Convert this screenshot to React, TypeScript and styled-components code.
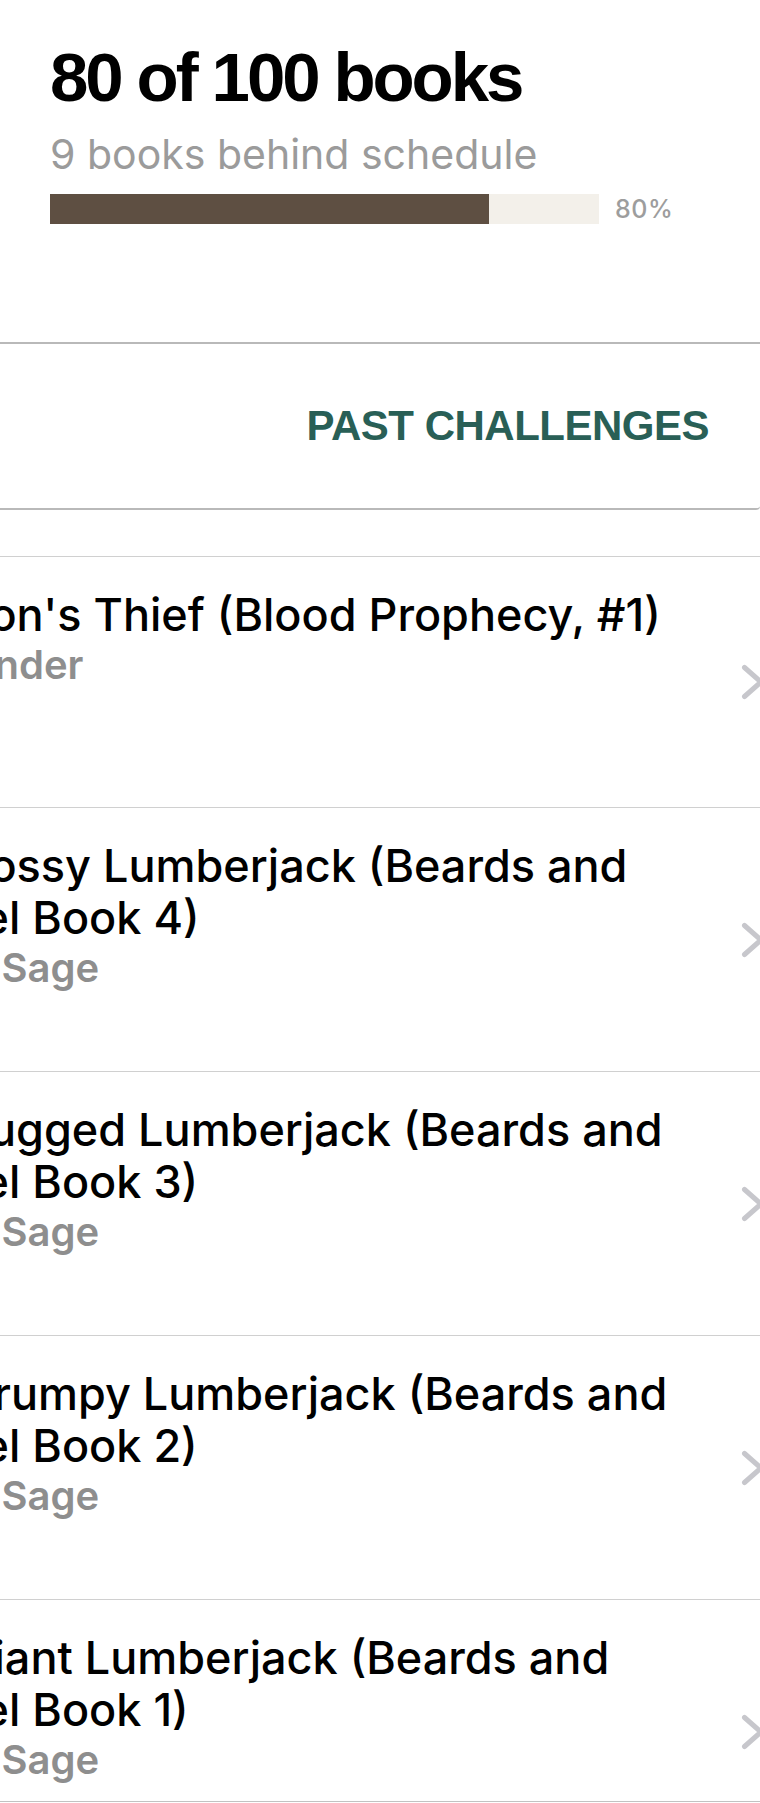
import React from "react";
import styled, { createGlobalStyle } from "styled-components";

const GlobalStyle = createGlobalStyle`
  html, body {
    margin: 0;
    padding: 0;
    background: #ffffff;
  }
  body {
    font-family: Inter, "Noto Sans", sans-serif;
    overflow: hidden;
    -webkit-font-smoothing: antialiased;
  }
  * {
    box-sizing: border-box;
  }
`;

const Screen = styled.div`
  height: 1803px;
  display: flex;
  flex-direction: column;
  padding-bottom: 1px;
`;

const Header = styled.header`
  height: 342px;
  padding: 40px 50px 0;
`;

const Goal = styled.h1`
  margin: 0;
  font-family: "Liberation Sans", Arial, sans-serif;
  font-size: 69px;
  line-height: 76px;
  font-weight: 700;
  color: #000;
  letter-spacing: -3.1px;
`;

const Behind = styled.div`
  margin-top: 16px;
  font-size: 41px;
  line-height: 44px;
  font-weight: 400;
  color: #9b9b9b;
`;

const ProgressRow = styled.div`
  margin-top: 18px;
  display: flex;
  align-items: center;
  gap: 16px;
`;

const Track = styled.div`
  width: 549px;
  height: 30px;
  background: #f3f0ea;
  display: flex;
`;

const Fill = styled.div`
  height: 100%;
  background: #5e4f42;
`;

const Percent = styled.span`
  font-size: 25px;
  font-weight: 500;
  color: #9d9d9d;
  letter-spacing: 0.5px;
`;

const ChallengesCard = styled.section`
  height: 168px;
  border-top: 2px solid #b9b9b9;
  border-bottom: 2px solid #b9b9b9;
  border-bottom-right-radius: 4px;
  display: flex;
  align-items: center;
  justify-content: flex-end;
  padding-right: 51px;
`;

const PastLink = styled.a`
  font-family: "Liberation Sans", Arial, sans-serif;
  font-size: 42px;
  font-weight: 700;
  letter-spacing: -0.5px;
  color: #295f56;
  text-decoration: none;
`;

const ListViewport = styled.div`
  flex: 1;
  margin-top: 46px;
  overflow: hidden;
  border-top: 1px solid #d0d0d0;
  border-bottom: 1px solid #c2c2c2;
`;

const ListTrack = styled.ul`
  list-style: none;
  margin: 0 0 0 -135px;
  padding: 0;
  width: calc(100% + 143px);
`;

const Row = styled.li<{ $height: number }>`
  height: ${(p) => p.$height}px;
  display: grid;
  grid-template-columns: 1fr 30px;
  column-gap: 20px;
  border-bottom: 1px solid #d0d0d0;
`;

const BookText = styled.div`
  align-self: start;
  padding-top: 32px;
`;

const BookTitle = styled.div`
  font-size: 45px;
  line-height: 52px;
  font-weight: 500;
  color: #000;
`;

const BookAuthor = styled.div`
  margin-top: 2px;
  font-size: 40px;
  line-height: 44px;
  font-weight: 600;
  color: #8e8e8e;
`;

const Chevron = styled.svg`
  align-self: center;
  width: 30px;
  height: 44px;
`;

const books = [
  { title: "Daemon's Thief (Blood Prophecy, #1)", author: "Mia Zander", height: 251 },
  { title: "The Bossy Lumberjack (Beards and Flannel Book 4)", author: "Parker Sage", height: 264 },
  { title: "The Rugged Lumberjack (Beards and Flannel Book 3)", author: "Parker Sage", height: 264 },
  { title: "The Grumpy Lumberjack (Beards and Flannel Book 2)", author: "Parker Sage", height: 264 },
  { title: "The Giant Lumberjack (Beards and Flannel Book 1)", author: "Parker Sage", height: 264 },
];

const read = 80;
const goal = 100;

export default function App() {
  const pct = Math.round((read / goal) * 100);
  return (
    <>
      <GlobalStyle />
      <Screen>
        <Header>
          <Goal>{`${read} of ${goal} books`}</Goal>
          <Behind>9 books behind schedule</Behind>
          <ProgressRow>
            <Track>
              <Fill style={{ width: `${pct}%` }} />
            </Track>
            <Percent>{pct}%</Percent>
          </ProgressRow>
        </Header>
        <ChallengesCard>
          <PastLink href="#">PAST CHALLENGES</PastLink>
        </ChallengesCard>
        <ListViewport>
          <ListTrack>
            {books.map((b) => (
              <Row key={b.title} $height={b.height}>
                <BookText>
                  <BookTitle>{b.title}</BookTitle>
                  <BookAuthor>{b.author}</BookAuthor>
                </BookText>
                <Chevron viewBox="0 0 30 44">
                  <path
                    d="M6.5 7.5 L23 22 L6.5 36.5"
                    fill="none"
                    stroke="#c7c7cc"
                    strokeWidth="5"
                    strokeLinecap="round"
                    strokeLinejoin="round"
                  />
                </Chevron>
              </Row>
            ))}
          </ListTrack>
        </ListViewport>
      </Screen>
    </>
  );
}
